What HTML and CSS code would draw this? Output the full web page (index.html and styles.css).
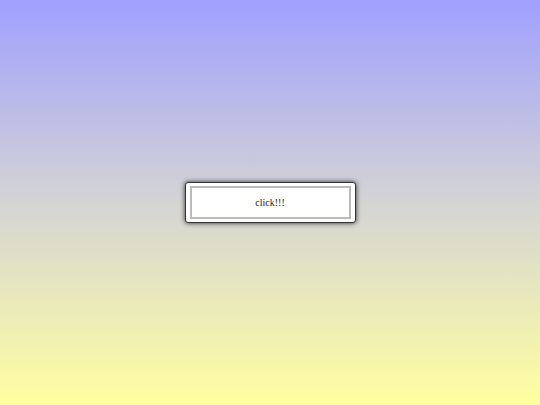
FILE: index.html
```html
<!DOCTYPE html>
<html lang="en">
<head>
    <meta charset="UTF-8">
    <meta name="viewport" content="width=device-width, initial-scale=1.0">
    <title>Click</title>
    <link rel="stylesheet" href="styles.css">
</head>
<body>
    <div class="stage">
        <div class="frame">
            <div class="button">click!!!</div>
        </div>
    </div>
</body>
</html>
```

FILE: styles.css
```css
html, body {
    margin: 0;
    height: 100%;
}
body {
    background: linear-gradient(to bottom, #a0a0ff 0%, #d4d4d4 50%, #ffffa0 100%);
    font-family: "Liberation Serif", "Times New Roman", serif;
    color: #222222;
}
.stage {
    height: 100%;
    display: flex;
    align-items: center;
    justify-content: center;
}
.frame {
    background-color: #FFFFFF;
    border: 1px solid #333333;
    border-radius: 3px;
    box-shadow: 0 0 5px rgba(0, 0, 0, 0.8);
    padding: 3px 4px;
}
.button {
    width: 157px;
    height: 29px;
    border: 2px solid #bbbbbb;
    display: flex;
    align-items: center;
    justify-content: center;
    font-size: 10px;
    cursor: pointer;
}
```
